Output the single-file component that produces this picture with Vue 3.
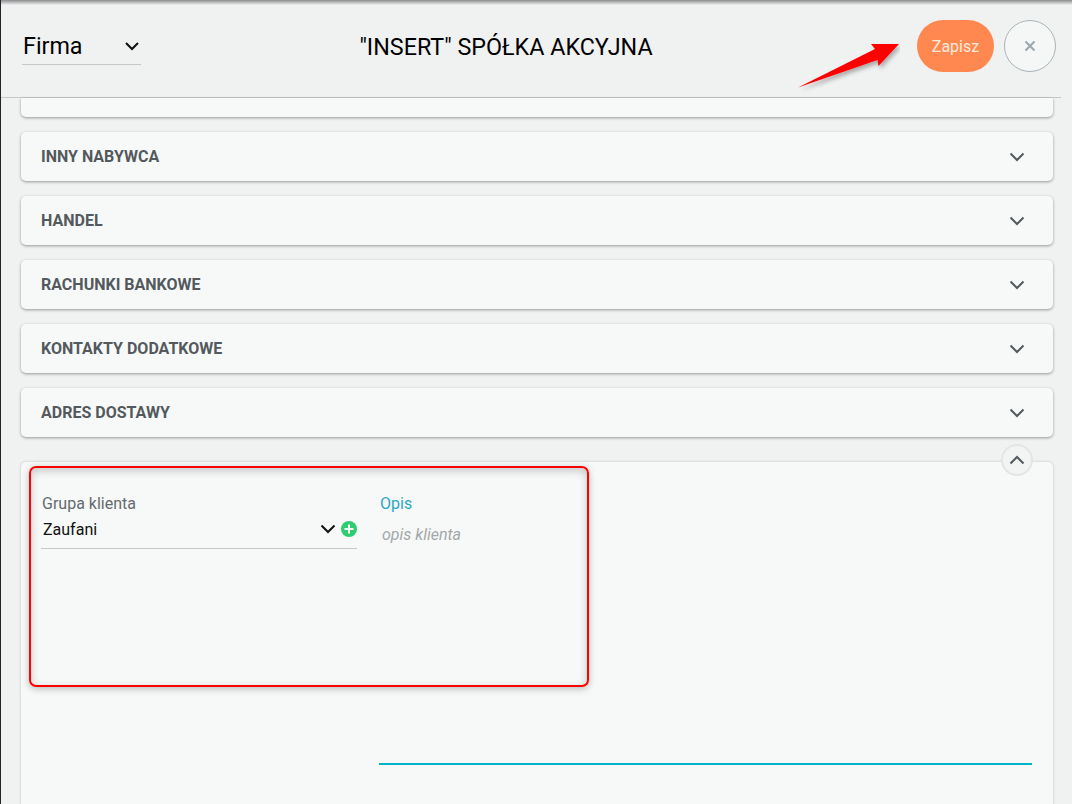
<script setup>
const sections = ['INNY NABYWCA', 'HANDEL', 'RACHUNKI BANKOWE', 'KONTAKTY DODATKOWE', 'ADRES DOSTAWY']
</script>

<template>
  <div class="page">
    <header class="head">
      <div class="kind">
        <span>Firma</span>
        <svg width="16" height="10" viewBox="0 0 16 10"><path d="M2 2l6 6 6-6" fill="none" stroke="#111" stroke-width="2"/></svg>
      </div>
      <h1 class="title">"INSERT" SPÓŁKA AKCYJNA</h1>
      <div class="actions">
        <button class="save">Zapisz</button>
        <button class="close">
          <svg width="12" height="12" viewBox="0 0 12 12"><path d="M1.500 1.500l9 9M10.500 1.500l-9 9" stroke="#9aa7ad" stroke-width="2" fill="none"/></svg>
        </button>
      </div>
    </header>

    <main class="body">
      <div class="card stub"></div>
      <div v-for="s in sections" :key="s" class="card row">
        <span>{{ s }}</span>
        <svg width="16" height="10" viewBox="0 0 16 10"><path d="M1.500 1.500L8 8l6.500-6.500" fill="none" stroke="#545b5e" stroke-width="2"/></svg>
      </div>
      <section class="card open">
        <button class="collapse">
          <svg width="16" height="10" viewBox="0 0 16 10"><path d="M1.500 8.500L8 2l6.500 6.500" fill="none" stroke="#545b5e" stroke-width="2"/></svg>
        </button>
        <div class="field group">
          <label>Grupa klienta</label>
          <div class="select">
            <span>Zaufani</span>
            <svg class="chev" width="16" height="10" viewBox="0 0 16 10"><path d="M1.500 1.500L8 8l6.500-6.500" fill="none" stroke="#111" stroke-width="2"/></svg>
            <svg class="plus" width="16" height="16" viewBox="0 0 16 16"><circle cx="8" cy="8" r="8" fill="#2ecc71"/><path d="M8 3.500v9M3.500 8h9" stroke="#f7f9f9" stroke-width="2"/></svg>
          </div>
        </div>
        <div class="field desc">
          <label>Opis</label>
          <div class="area">opis klienta</div>
        </div>
      </section>
    </main>

    <div class="redbox"></div>
    <svg class="arrow" width="120" height="60" viewBox="0 0 120 60">
      <defs>
        <filter id="sh" x="-20%" y="-20%" width="150%" height="160%"><feDropShadow dx="2" dy="3" stdDeviation="2" flood-color="#000" flood-opacity=".3"/></filter>
      </defs>
      <path d="M18 47.500L95 9L91 4L119 4L98.500 26L97.500 20Z" fill="#ff0000" filter="url(#sh)"/>
    </svg>
    <div class="topshade"></div>
  </div>
</template>

<style scoped>
.page {
  position: relative;
  width: 1072px;
  height: 804px;
  overflow: hidden;
  background: #f0f1f1;
  border-left: 1px solid #1f2426;
  box-sizing: border-box;
  font-family: Roboto, "Liberation Sans", sans-serif;
}
.topshade {
  position: absolute;
  left: 0; right: 0; top: 0;
  height: 5px;
  background: linear-gradient(#8a8d8e, #f0f1f1);
}
.head {
  box-sizing: content-box;
  width: 1034px;
  height: 77px;
  border-bottom: 1px solid #c6c8c8;
  display: flex;
  align-items: flex-start;
  padding: 20px 5px 0 21px;
}
.kind {
  width: 119px;
  height: 45px;
  box-sizing: border-box;
  border-bottom: 1px solid #c6c8c8;
  display: flex;
  align-items: center;
  justify-content: space-between;
  padding: 8px 1px 0 1px;
  font-size: 23.300px;
  color: #000;
}
.title {
  flex: 1;
  margin: 12px 0 0;
  padding-right: 46px;
  text-align: center;
  font-size: 23.300px;
  font-weight: 400;
  line-height: 30px;
  color: #000;
}
.actions {
  display: flex;
  gap: 10px;
}
button {
  font-family: inherit;
  padding: 0;
  margin: 0;
}
.save {
  width: 77px;
  height: 52px;
  border: 0;
  border-radius: 26px;
  background: #ff8850;
  color: #fde8dc;
  font-size: 16px;
}
.close {
  width: 52px;
  height: 52px;
  border: 1px solid #a9b4b8;
  border-radius: 50%;
  background: #f5f7f7;
  display: flex;
  align-items: center;
  justify-content: center;
}
.body {
  display: flex;
  flex-direction: column;
  gap: 15px;
  padding: 0 19px 0 20px;
}
.card {
  background: #f7f9f8;
  border-radius: 5px;
  box-shadow: 0 1px 3px rgba(0, 0, 0, .38);
  flex: none;
}
.stub {
  height: 19px;
  border-radius: 0 0 5px 5px;
}
.row {
  height: 49px;
  box-sizing: border-box;
  display: flex;
  align-items: center;
  justify-content: space-between;
  padding: 0 27px 0 20px;
  font-size: 16px;
  font-weight: 700;
  color: #54595d;
}
.row svg { margin-right: 1px; }
.open {
  position: relative;
  margin-top: 9px;
  margin-top: 10px;
  height: 400px;
  box-shadow: 0 0 3px rgba(0, 0, 0, .2);
  display: flex;
  padding: 33px 21px 0 20px;
  gap: 22px;
}
.collapse {
  position: absolute;
  right: 20px;
  top: -18px;
  width: 32px;
  height: 32px;
  border-radius: 50%;
  border: 2px solid #e3e5e5;
  background: #f2f3f3;
  display: flex;
  align-items: center;
  justify-content: center;
}
.field label {
  display: block;
  font-size: 16px;
  line-height: 18px;
}
.group {
  width: 316px;
  flex: none;
}
.group label {
  margin-left: 1px;
  color: #646a6e;
}
.select {
  height: 36px;
  box-sizing: border-box;
  border-bottom: 1px solid #c6c8c8;
  display: flex;
  align-items: center;
  padding: 0 0 3px 2px;
  font-size: 16px;
  color: #111;
}
.select span { flex: 1; }
.plus { margin-left: 5px; }
.desc {
  flex: 1;
  height: 270px;
  box-sizing: border-box;
  border-bottom: 2px solid #00b4cc;
}
.desc label {
  color: #2ba8c0;
  margin-left: 1px;
}
.area {
  margin: 12px 0 0 3px;
  font-size: 16px;
  font-style: italic;
  color: #a3a8aa;
}
.redbox {
  position: absolute;
  left: 28px;
  top: 466px;
  width: 560px;
  height: 221px;
  box-sizing: border-box;
  border: 2px solid #f00;
  border-radius: 7px;
  box-shadow: 0 2px 7px rgba(0, 0, 0, .25), inset 0 3px 8px rgba(0, 0, 0, .2);
}
.arrow {
  position: absolute;
  left: 779px;
  top: 40px;
}
</style>
